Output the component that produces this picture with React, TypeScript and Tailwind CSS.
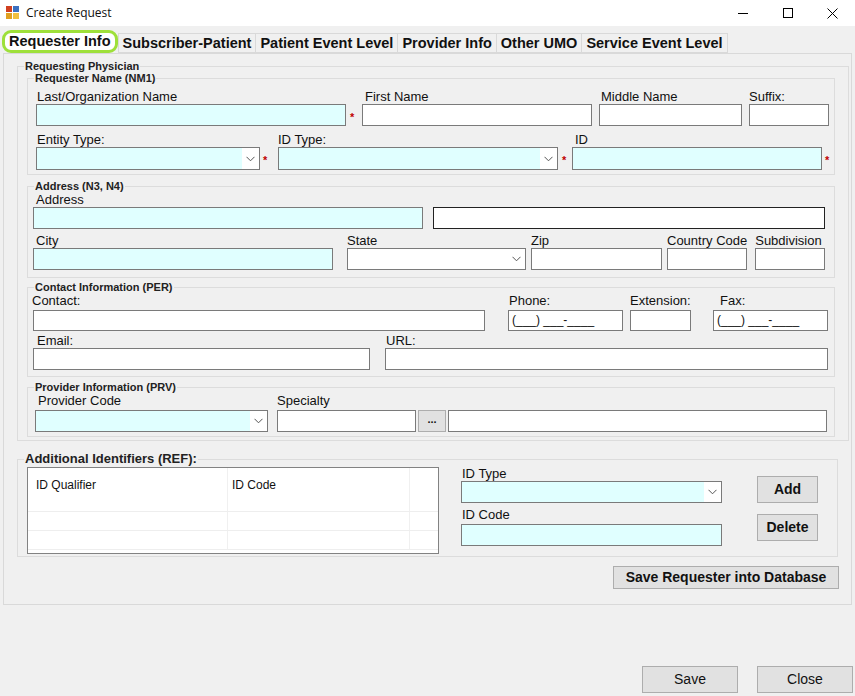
import React from "react";

const cyan = "bg-[#e0ffff]";

function Box({ w, c = "bg-white", h = "h-[22px]", children }: { w: string; c?: string; h?: string; children?: React.ReactNode }) {
  return <div className={`${w} ${h} border border-[#7a7a7a] ${c} text-[12px] leading-[18px] px-[3px] overflow-hidden whitespace-nowrap`}>{children}</div>;
}

function Combo({ w, c = "bg-white", h = "h-[23px]" }: { w: string; c?: string; h?: string }) {
  return (
    <div className={`${w} ${h} border border-[#7a7a7a] ${c} flex justify-end`}>
      <div className="w-[17px] h-full bg-white flex items-center justify-center">
        <svg width="9" height="6" viewBox="0 0 9 6"><path d="M0.5 0.8 L4.5 4.8 L8.5 0.8" fill="none" stroke="#555" strokeWidth="1" /></svg>
      </div>
    </div>
  );
}

function Label({ children, c = "" }: { children: React.ReactNode; c?: string }) {
  return <div className={`h-[15px] leading-[15px] text-[13px] text-[#111] whitespace-nowrap ${c}`}>{children}</div>;
}

function Star() {
  return <span className="text-[#c00000] text-[11px] leading-[10px] font-bold">*</span>;
}

function Group({ title, c, children }: { title: string; c: string; children: React.ReactNode }) {
  return (
    <fieldset className={`border border-[#dcdcdc] ${c}`}>
      <legend className="ml-[6px] px-[1px] text-[11px] leading-[12px] font-bold text-[#222]">{title}</legend>
      {children}
    </fieldset>
  );
}

function Btn({ w, h, children, c = "" }: { w: string; h: string; children: React.ReactNode; c?: string }) {
  return <div className={`${w} ${h} ${c} border border-[#adadad] bg-[#e1e1e1] flex items-center justify-center text-[14px] text-[#111]`}>{children}</div>;
}

export default function App() {
  return (
    <div className="w-[855px] h-[696px] bg-[#f0f0f0] overflow-hidden text-[#111]" style={{ fontFamily: '"Liberation Sans", Arial, sans-serif' }}>
      <div className="h-[26px] bg-white flex items-center">
        <svg className="ml-[6px]" width="14" height="14" viewBox="0 0 14 14">
          <rect x="0" y="0" width="6" height="6" fill="#d04020" />
          <rect x="7" y="0" width="6" height="6" fill="#3a70c0" />
          <rect x="0" y="7" width="6" height="6" fill="#e0a020" />
          <rect x="7" y="7" width="6" height="6" fill="#f0c040" />
        </svg>
        <span className="ml-[6px] text-[12px]" style={{ fontFamily: '"Open Sans", "Noto Sans", sans-serif' }}>Create Request</span>
        <div className="ml-auto flex items-center">
          <div className="w-[45px] flex justify-center"><div className="w-[10px] h-[1px] bg-black" /></div>
          <div className="w-[45px] flex justify-center"><div className="w-[10px] h-[10px] border border-black" /></div>
          <div className="w-[45px] flex justify-center">
            <svg width="11" height="11" viewBox="0 0 11 11"><path d="M0.5 0.5 L10.5 10.5 M10.5 0.5 L0.5 10.5" stroke="black" strokeWidth="1" /></svg>
          </div>
        </div>
      </div>
      <div className="mt-[6px] ml-[2px] flex items-end h-[21px] text-[14.5px] font-bold">
        <div className="h-[23px] px-[4px] bg-white border-[3px] border-[#9ee03a] rounded-[9px] flex items-center leading-none">Requester Info</div>
        <div className="h-[20px] px-[4px] border border-[#d9d9d9] flex items-center leading-none">Subscriber-Patient</div>
        <div className="h-[20px] px-[4px] border border-l-0 border-[#d9d9d9] flex items-center leading-none">Patient Event Level</div>
        <div className="h-[20px] px-[4px] border border-l-0 border-[#d9d9d9] flex items-center leading-none">Provider Info</div>
        <div className="h-[20px] px-[4px] border border-l-0 border-[#d9d9d9] flex items-center leading-none">Other UMO</div>
        <div className="h-[20px] px-[4px] border border-l-0 border-[#d9d9d9] flex items-center leading-none">Service Event Level</div>
      </div>
      <div className="ml-[3px] w-[849px] h-[552px] border border-[#d9d9d9] bg-[#f0f0f0] pt-[6px]">
        <Group title="Requesting Physician" c="ml-[13px] mr-[2px] pb-[3px]">
          <Group title="Requester Name (NM1)" c="ml-[9px] mr-[13px] pb-[3px]">
            <div className="flex mt-[5px] ml-[8px]">
              <div><Label c="pl-[1px]">Last/Organization Name</Label><Box w="w-[310px]" c={cyan} /></div>
              <div className="w-[16px] pl-[4px] pt-[15px]"><Star /></div>
              <div><Label c="pl-[3px]">First Name</Label><Box w="w-[230px]" /></div>
              <div className="ml-[7px]"><Label c="pl-[2px]">Middle Name</Label><Box w="w-[143px]" /></div>
              <div className="ml-[7px]"><Label>Suffix:</Label><Box w="w-[80px]" /></div>
            </div>
            <div className="flex mt-[4px] ml-[8px]">
              <div><Label c="pl-[1px]">Entity Type:</Label><Combo w="w-[224px]" c={cyan} /></div>
              <div className="w-[18px] pl-[3px] pt-[15px]"><Star /></div>
              <div><Label>ID Type:</Label><Combo w="w-[280px]" c={cyan} /></div>
              <div className="w-[14px] pl-[4px] pt-[15px]"><Star /></div>
              <div><Label c="pl-[3px]">ID</Label><Box w="w-[250px]" h="h-[23px]" c={cyan} /></div>
              <div className="pl-[3px] pt-[15px]"><Star /></div>
            </div>
          </Group>
          <Group title="Address (N3, N4)" c="ml-[9px] mr-[13px] mt-[5px] pb-[7px]">
            <div className="mt-[0px] ml-[5px]">
              <Label c="pl-[3px]">Address</Label>
              <div className="flex">
                <Box w="w-[390px]" c={cyan} />
                <div className="ml-[10px] w-[392px] h-[22px] border border-[#222] bg-white" />
              </div>
            </div>
            <div className="flex mt-[4px] ml-[5px]">
              <div><Label c="pl-[3px]">City</Label><Box w="w-[300px]" c={cyan} /></div>
              <div className="ml-[14px]"><Label>State</Label><Combo w="w-[179px]" h="h-[22px]" /></div>
              <div className="ml-[5px]"><Label>Zip</Label><Box w="w-[131px]" /></div>
              <div className="ml-[5px]"><Label>Country Code</Label><Box w="w-[80px]" /></div>
              <div className="ml-[8px]"><Label>Subdivision</Label><Box w="w-[70px]" /></div>
            </div>
          </Group>
          <Group title="Contact Information (PER)" c="ml-[9px] mr-[13px] mt-[3px] pb-[6px]">
            <div className="flex mt-[0px] ml-[5px]">
              <div><Label c="-ml-[1px] h-[17px]">Contact:</Label><Box w="w-[452px]" h="h-[21px]" /></div>
              <div className="ml-[23px]"><Label c="pl-[1px] h-[17px]">Phone:</Label><Box w="w-[115px]" h="h-[21px]">(___) ___-____</Box></div>
              <div className="ml-[7px]"><Label c="h-[17px]">Extension:</Label><Box w="w-[61px]" h="h-[21px]" /></div>
              <div className="ml-[22px]"><Label c="pl-[7px] h-[17px]">Fax:</Label><Box w="w-[115px]" h="h-[21px]">(___) ___-____</Box></div>
            </div>
            <div className="flex mt-[2px] ml-[5px]">
              <div><Label c="pl-[4px]">Email:</Label><Box w="w-[337px]" /></div>
              <div className="ml-[15px]"><Label c="pl-[1px]">URL:</Label><Box w="w-[443px]" /></div>
            </div>
          </Group>
          <Group title="Provider Information (PRV)" c="ml-[9px] mr-[13px] mt-[4px] pb-[4px]">
            <div className="flex mt-[0px] ml-[7px] items-end">
              <div><Label c="pl-[3px] h-[17px]">Provider Code</Label><Combo w="w-[233px]" h="h-[22px]" c={cyan} /></div>
              <div className="ml-[9px]"><Label c="h-[17px]">Specialty</Label><Box w="w-[139px]" /></div>
              <Btn w="w-[28px] ml-[2px]" h="h-[22px]"><span className="text-[11px] font-bold leading-none -mt-[4px]">...</span></Btn>
              <div className="ml-[2px]"><Box w="w-[379px]" /></div>
            </div>
          </Group>
        </Group>

        <fieldset className="border border-[#dcdcdc] ml-[13px] w-[821px] mt-[10px] pb-[2px]">
          <legend className="ml-[6px] px-[1px] text-[13px] leading-[16px] font-bold text-[#222]">Additional Identifiers (REF):</legend>
          <div className="flex">
            <div className="ml-[9px] w-[412px] h-[87px] border border-[#828282] bg-white flex flex-col">
              <div className="flex h-[43px] text-[12px]">
                <div className="w-[200px] pl-[8px] pt-[8px] border-r border-[#f0f0f0]">ID Qualifier</div>
                <div className="w-[182px] pl-[4px] pt-[8px] border-r border-[#f0f0f0]">ID Code</div>
                <div className="flex-1" />
              </div>
              {[0, 1].map((i) => (
                <div key={i} className="flex h-[19px] border-t border-[#eeeeee]">
                  <div className="w-[200px] border-r border-[#f0f0f0]" />
                  <div className="w-[182px] border-r border-[#f0f0f0]" />
                  <div className="flex-1" />
                </div>
              ))}
              <div className="border-t border-[#eeeeee]" />
            </div>
            <div className="ml-[22px] -mt-[1px]">
              <Label c="pl-[1px] h-[15px] text-[13px]">ID Type</Label>
              <Combo w="w-[261px]" h="h-[22px]" c={cyan} />
              <Label c="pl-[1px] mt-[4px] h-[15px] text-[13px]">ID Code</Label>
              <div className="mt-[2px]"><Box w="w-[261px]" c={cyan} /></div>
            </div>
            <div className="ml-[35px] mt-[9px]">
              <Btn w="w-[61px]" h="h-[27px]"><span className="font-bold">Add</span></Btn>
              <Btn w="w-[61px]" h="h-[27px]" c="mt-[11px]"><span className="font-bold">Delete</span></Btn>
            </div>
          </div>
        </fieldset>
        <div className="flex justify-end w-[835px] mt-[9px]">
          <Btn w="w-[226px]" h="h-[23px]"><span className="font-bold">Save Requester into Database</span></Btn>
        </div>
      </div>
      <div className="flex justify-end mt-[61px] mr-[2px] gap-[19px]">
        <Btn w="w-[96px]" h="h-[27px]"><span className="text-[14px]">Save</span></Btn>
        <Btn w="w-[96px]" h="h-[27px]"><span className="text-[14px]">Close</span></Btn>
      </div>
    </div>
  );
}
